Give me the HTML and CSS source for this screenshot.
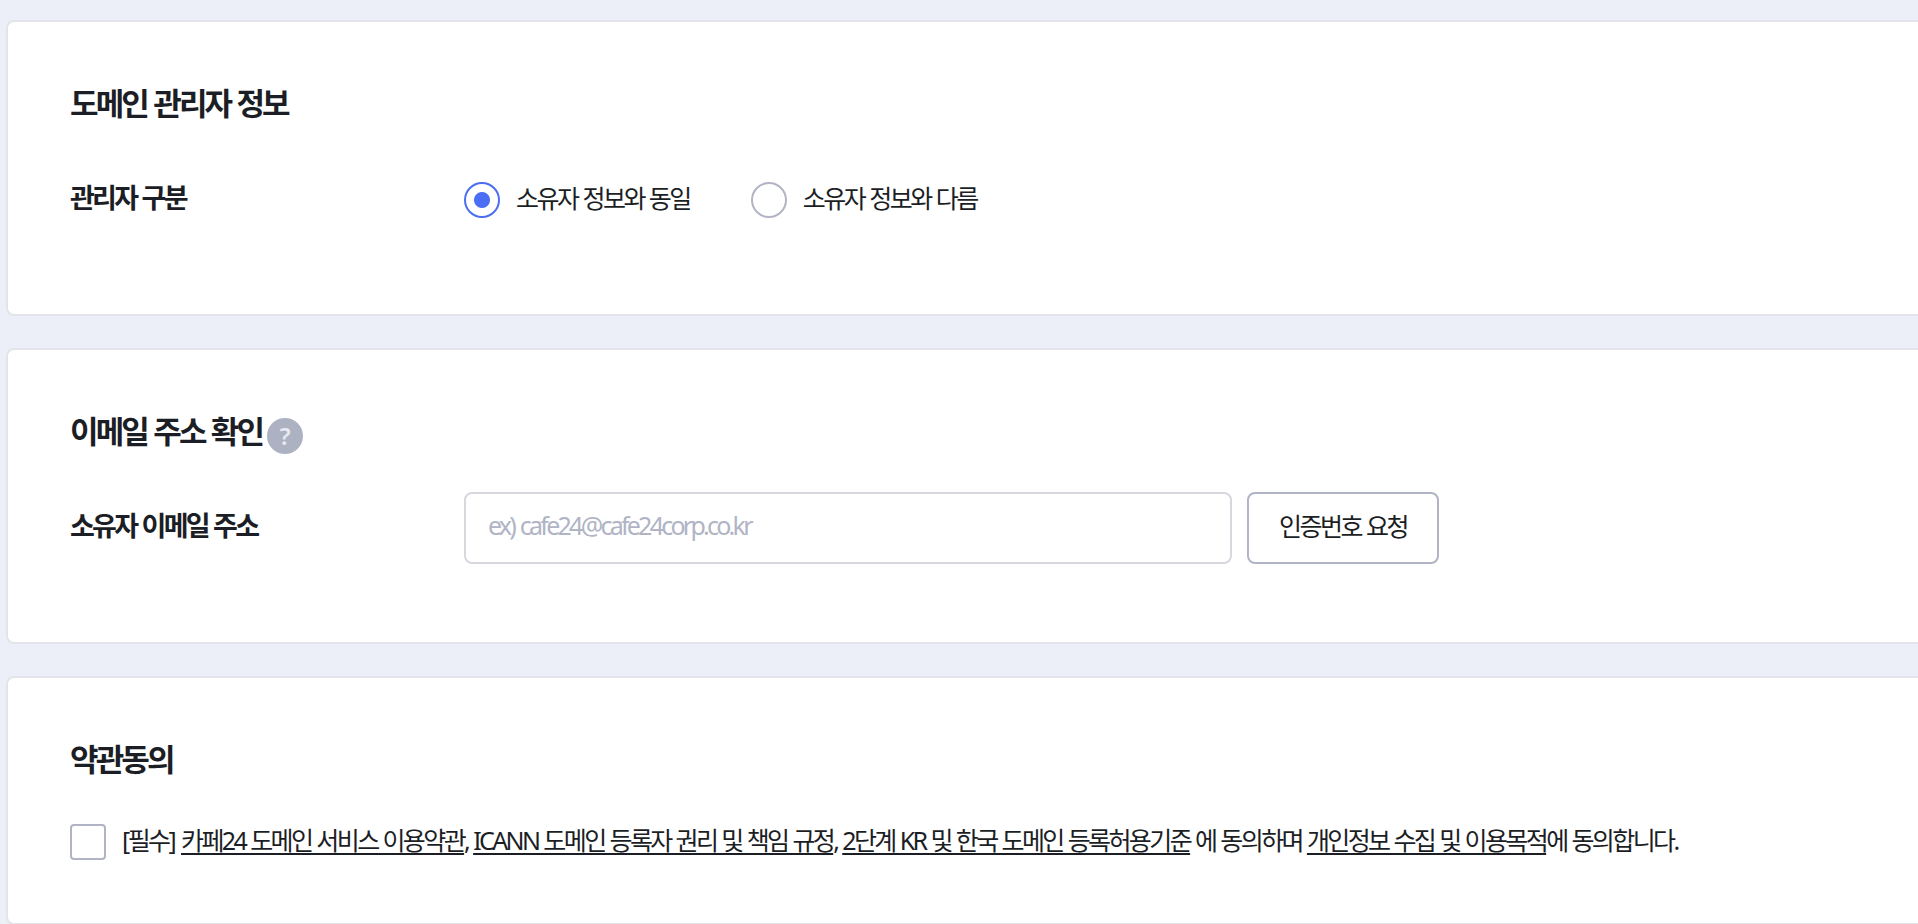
FILE: index.html
```html
<!DOCTYPE html>
<html lang="ko">
<head>
    <meta charset="UTF-8">
    <meta name="viewport" content="width=device-width, initial-scale=1.0">
    <title>도메인 신청</title>
    <link rel="stylesheet" href="styles.css">
</head>
<body>
    <main class="container">
        <section class="card">
            <h2 class="card-title">도메인 관리자 정보</h2>
            <div class="form-row">
                <div class="form-label">관리자 구분</div>
                <div class="form-field">
                    <label class="radio">
                        <input type="radio" name="manager" checked>
                        <span>소유자 정보와 동일</span>
                    </label>
                    <label class="radio">
                        <input type="radio" name="manager">
                        <span>소유자 정보와 다름</span>
                    </label>
                </div>
            </div>
        </section>

        <section class="card">
            <h2 class="card-title">
                <span>이메일 주소 확인</span>
                <button class="help" type="button">?</button>
            </h2>
            <div class="form-row">
                <div class="form-label">소유자 이메일 주소</div>
                <div class="form-field">
                    <input class="text-input" type="text" placeholder="ex) cafe24@cafe24corp.co.kr">
                    <button class="btn" type="button">인증번호 요청</button>
                </div>
            </div>
        </section>

        <section class="card">
            <h2 class="card-title">약관동의</h2>
            <label class="agree">
                <input type="checkbox">
                <span class="agree-text">[필수] <a href="#">카페24 도메인 서비스 이용약관</a>, <a href="#">ICANN 도메인 등록자 권리 및 책임 규정</a>, <a href="#">2단계 KR 및 한국 도메인 등록허용기준</a> 에 동의하며 <a href="#">개인정보 수집 및 이용목적</a>에 동의합니다.</span>
            </label>
        </section>
    </main>
</body>
</html>
```
FILE: styles.css
```css
:root {
    --bg-color: #eceff8;
    --text-color: #1c1e25;
    --card-border: #e2e4e9;
    --input-border: #d6d8de;
    --control-border: #b0b4c4;
    --primary: #4c6ef5;
}

* {
    margin: 0;
    padding: 0;
    box-sizing: border-box;
}

body {
    height: 100vh;
    overflow: hidden;
    background-color: var(--bg-color);
    color: var(--text-color);
    font-family: 'Noto Sans', 'Noto Sans CJK KR', sans-serif;
    font-size: 25px;
    letter-spacing: -2.52px;
    word-spacing: 1px;
}

/* cards run past the right edge of the window */
.container {
    width: 2000px;
    padding: 20px 0 0 6px;
    display: flex;
    flex-direction: column;
    gap: 32px;
}

.card {
    height: 296px;
    padding: 57px 62px 0;
    background-color: white;
    border: 2px solid var(--card-border);
    border-radius: 8px;
}

.card:last-child {
    height: 249px;
}

.card-title {
    height: 48px;
    display: flex;
    align-items: center;
    gap: 5px;
    font-size: 31px;
    font-weight: bold;
    letter-spacing: -2.85px;
    line-height: 48px;
}

.help {
    width: 36px;
    height: 36px;
    margin-top: 9px;
    border: none;
    border-radius: 50%;
    background-color: #adb2c3;
    color: #e8eaf2;
    font-family: inherit;
    font-size: 24px;
    font-weight: 600;
    line-height: 36px;
    text-align: center;
}

.form-row {
    height: 72px;
    margin-top: 37px;
    display: flex;
    align-items: center;
}

.form-label {
    width: 394px;
    padding-bottom: 4px;
    font-size: 27px;
    font-weight: bold;
    letter-spacing: -2.75px;
    line-height: 40px;
}

.form-field {
    display: flex;
    align-items: center;
    gap: 15px;
}

.radio {
    display: flex;
    align-items: center;
    gap: 16px;
    margin-right: 46px;
    line-height: 40px;
}

.radio span {
    padding-bottom: 4px;
}

.radio input {
    appearance: none;
    width: 36px;
    height: 36px;
    border: 2px solid var(--control-border);
    border-radius: 50%;
}

.radio input:checked {
    border-color: var(--primary);
    background: radial-gradient(circle, var(--primary) 7.5px, white 8.5px);
}

.text-input {
    width: 768px;
    height: 72px;
    padding: 0 22px 6px;
    border: 2px solid var(--input-border);
    border-radius: 8px;
    color: var(--text-color);
    font: inherit;
    letter-spacing: -2.75px;
    word-spacing: 2px;
}

.text-input::placeholder {
    color: var(--control-border);
}

.btn {
    width: 192px;
    height: 72px;
    padding-bottom: 6px;
    border: 2px solid var(--control-border);
    border-radius: 8px;
    background-color: white;
    color: var(--text-color);
    font: inherit;
    letter-spacing: inherit;
    word-spacing: inherit;
}

.agree {
    height: 36px;
    margin-top: 41px;
    display: flex;
    align-items: center;
    gap: 16px;
    letter-spacing: -2.59px;
    line-height: 36px;
    white-space: nowrap;
}

.agree input {
    appearance: none;
    width: 36px;
    height: 36px;
    border: 2px solid var(--control-border);
    border-radius: 4px;
}

.agree-text {
    padding-bottom: 5px;
}

.agree a {
    color: inherit;
    text-decoration: underline;
    text-decoration-thickness: 2px;
    text-underline-offset: 3px;
    text-decoration-skip-ink: none;
}

.agree a:first-child {
    margin-left: 2px;
}
```
